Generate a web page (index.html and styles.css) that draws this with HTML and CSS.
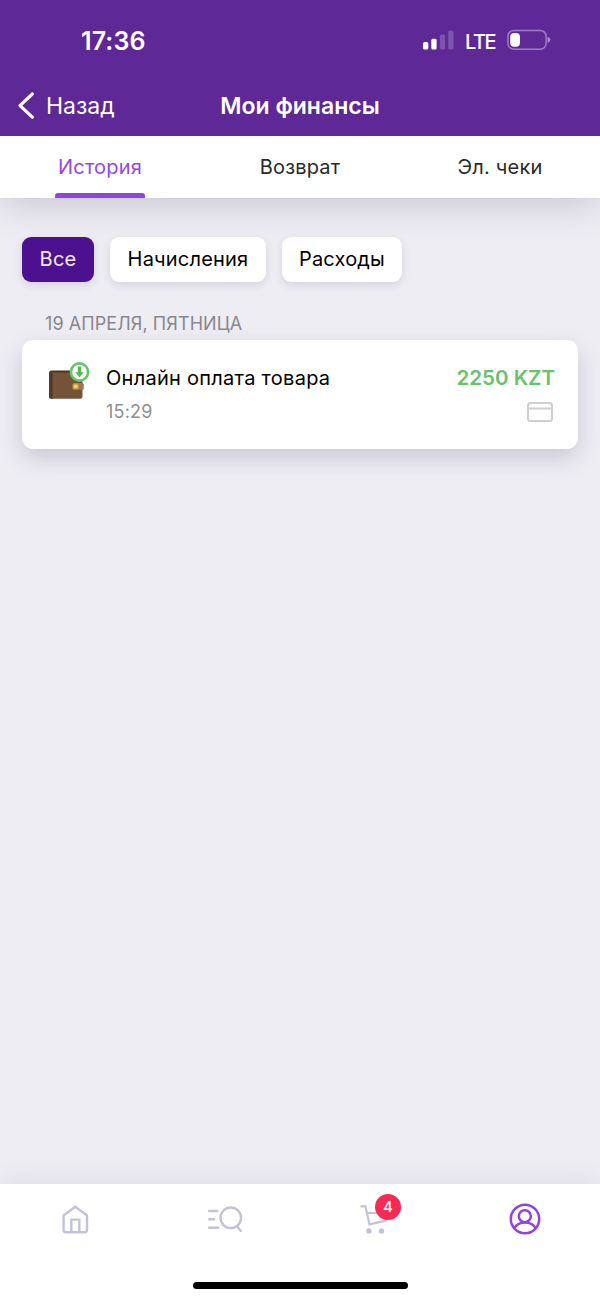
FILE: index.html
```html
<!DOCTYPE html>
<html lang="ru">
<head>
<meta charset="utf-8">
<title>Мои финансы</title>
<link rel="stylesheet" href="styles.css">
</head>
<body>
<div class="app">
  <header class="header">
    <div class="status">
      <span class="clock">17:36</span>
      <div class="indicators">
        <svg class="signal" width="32" height="20" viewBox="0 0 32 20" fill="#fff">
          <rect x="0" y="12" width="5.3" height="7.5" rx="1.5"/>
          <rect x="8.3" y="8.7" width="5.3" height="10.8" rx="1.5"/>
          <rect x="16.8" y="4.5" width="5.3" height="15" rx="1.5" opacity=".2"/>
          <rect x="25.2" y="0.5" width="5.3" height="19" rx="1.5" opacity=".2"/>
        </svg>
        <span class="network">LTE</span>
        <svg class="battery" width="44" height="22" viewBox="0 0 44 22">
          <rect x="0.9" y="1.4" width="38.2" height="18.8" rx="5.8" fill="none" stroke="#fff" stroke-opacity=".4" stroke-width="1.5"/>
          <rect x="3.2" y="4" width="9.8" height="13.8" rx="4" fill="#fff"/>
          <path d="M40.6 7.7q2.8 1 2.8 3.1t-2.8 3.1z" fill="#fff" fill-opacity=".5"/>
        </svg>
      </div>
    </div>
    <nav class="navbar">
      <a class="back">
        <svg width="18" height="28" viewBox="0 0 18 28" fill="none" stroke="#fff" stroke-width="3.2" stroke-linecap="round" stroke-linejoin="round"><path d="M15.3 2 3 13.6 15.3 25.2"/></svg>
        <span>Назад</span>
      </a>
      <h1 class="title">Мои финансы</h1>
    </nav>
  </header>

  <div class="tabs">
    <a class="tab tab-active"><span>История</span></a>
    <a class="tab"><span>Возврат</span></a>
    <a class="tab"><span>Эл. чеки</span></a>
  </div>

  <main class="content">
    <div class="chips">
      <button class="chip chip-all">Все</button>
      <button class="chip chip-income">Начисления</button>
      <button class="chip chip-expense">Расходы</button>
    </div>
    <h2 class="date">19 АПРЕЛЯ, ПЯТНИЦА</h2>
    <article class="card">
      <svg class="wallet" width="44" height="40" viewBox="0 0 44 40">
        <rect x="2" y="8.5" width="33" height="15" rx="3" fill="#493427"/>
        <rect x="2" y="10.4" width="33.5" height="26.3" rx="2.5" fill="#745338"/>
        <path d="M2 11h3.7v25.7H4.5A2.5 2.5 0 0 1 2 34.2z" fill="#523a2a"/>
        <rect x="25.5" y="21" width="11.3" height="6.8" rx="1.5" fill="#9b7958"/>
        <rect x="25.8" y="21.5" width="6" height="5.8" rx="1" fill="#c79c41"/>
        <circle cx="28.7" cy="24.4" r="1.9" fill="#f4d377"/>
        <circle cx="32.5" cy="10" r="8.6" fill="#fff" stroke="#67c56b" stroke-width="2.7"/>
        <path d="M30.8 4.6h3.4v5.6h2.5l-4.2 5.2-4.2-5.2h2.5z" fill="#57b95c"/>
      </svg>
      <div class="details">
        <div class="name">Онлайн оплата товара</div>
        <div class="time">15:29</div>
      </div>
      <div class="sum">
        <div class="amount">2250 KZT</div>
        <svg class="method" width="26" height="20" viewBox="0 0 26 20" fill="none" stroke="#cfcfcf" stroke-width="2"><rect x="1" y="1" width="24" height="18" rx="2.5"/><path d="M1 6.5h24"/></svg>
      </div>
    </article>
  </main>

  <footer class="tabbar">
    <a class="item">
      <svg width="28" height="30" viewBox="0 0 28 30" fill="none" stroke="#c4c3d5" stroke-width="2.4" stroke-linejoin="round"><path d="M14.3 2.7 26 11.5v14.6a2.2 2.2 0 0 1-2.2 2.2H4.8a2.2 2.2 0 0 1-2.2-2.2V11.5z"/><path d="M10.3 28.3V15.6h8v12.7"/></svg>
    </a>
    <a class="item">
      <svg width="36" height="30" viewBox="0 0 36 30" fill="none" stroke="#c4c3d5" stroke-width="2.4" stroke-linecap="round"><path d="M2.2 7h8M2.2 15.3h5M2.2 23.8h9M30.2 22.6 33.8 26.9"/><circle cx="23.8" cy="13.8" r="10.3"/></svg>
    </a>
    <a class="item">
      <span class="cart">
        <svg width="30" height="32" viewBox="0 0 30 32" fill="none" stroke="#c4c3d5" stroke-width="2.2"><path d="M.5 2.4h5l4 18 17.5-4M7.1 9h20"/><g fill="#c4c3d5" stroke="none"><circle cx="8.9" cy="27" r="2.7"/><circle cx="21.5" cy="27" r="2.7"/></g></svg>
        <span class="badge">4</span>
      </span>
    </a>
    <a class="item">
      <svg width="32" height="32" viewBox="0 0 32 32" fill="none" stroke="#9143dd" stroke-width="2.5"><circle cx="16" cy="16" r="14.2"/><circle cx="15.8" cy="13.2" r="6"/><path d="M5.2 25.4C9.5 17.5 22.5 17.5 26.8 25.4"/></svg>
    </a>
    <div class="home-indicator"></div>
  </footer>
</div>
</body>
</html>
```

FILE: styles.css
```css
* { box-sizing: border-box; }
body { margin: 0; font-family: Inter, "Noto Sans", sans-serif; color: #000; }
svg { display: block; flex: none; }
.app { display: flex; flex-direction: column; width: 600px; height: 1300px; background: #eeedf4; overflow: hidden; }

.header { position: relative; z-index: 2; height: 136px; flex: none; background: #5e2897; color: #fff; }
.status { display: flex; justify-content: space-between; height: 76px; padding: 0 49px 0 81px; }
.clock { margin-top: 26px; font-size: 25px; line-height: 30px; font-weight: 600; letter-spacing: .1px; }
.indicators { display: flex; align-items: flex-start; padding-top: 30px; }
.signal { margin-right: 10px; }
.network { width: 42px; font-size: 20px; line-height: 24px; font-weight: 500; letter-spacing: -1.5px; }
.battery { margin-top: -1px; }
.navbar { display: grid; grid-template-columns: 200px 200px 200px; align-items: center; height: 60px; }
.back { display: flex; align-items: center; gap: 11px; padding-left: 17px; font-size: 23px; }
.title { margin: 0; text-align: center; font-size: 23px; font-weight: 600; white-space: nowrap; }

.tabs { display: grid; grid-template-columns: repeat(3, 1fr); flex: none; height: 61.5px; background: #fff; box-shadow: 0 4px 38px rgba(40, 38, 55, .22); z-index: 1; }
.tab { display: flex; flex-direction: column; align-items: center; font-size: 20px; line-height: 62px; letter-spacing: .2px; color: #29292b; }
.tab-active { color: #9348e0; }
.tab-active::after { content: ""; width: 90px; height: 4.5px; margin-top: -5px; border-radius: 3px 3px 0 0; background: #9143dd; }

.content { flex: 1; padding: 39px 22px 0; }
.chips { display: flex; gap: 16px; }
.chip { height: 45px; padding: 0; border: 0; border-radius: 9px; background: #fff; color: #000; font: 400 20px/45px Inter, "Noto Sans", sans-serif; letter-spacing: .2px; box-shadow: 0 3px 9px rgba(40, 38, 55, .13); }
.chip-all { width: 72px; background: #4c118e; color: #fbeaff; }
.chip-income { width: 156px; }
.chip-expense { width: 120px; }
.date { margin: 30px 0 0 23px; font-size: 18px; line-height: 24px; font-weight: 400; letter-spacing: .08px; color: #88878e; }
.card { display: flex; height: 109px; margin-top: 4px; padding: 22px 23px 0 25px; border-radius: 11px; background: #fff; box-shadow: 0 9px 22px rgba(40, 38, 55, .18); }
.details { flex: 1; margin-left: 15px; }
.name { margin-top: 3px; font-size: 20px; line-height: 26px; letter-spacing: .27px; white-space: nowrap; }
.time { margin-top: 9px; font-size: 18px; line-height: 24px; letter-spacing: .2px; color: #8f8f91; }
.sum { display: flex; flex-direction: column; align-items: flex-end; }
.amount { margin-top: 3px; font-size: 20.5px; line-height: 26px; font-weight: 600; color: #67c26b; white-space: nowrap; }
.method { margin: 11px 2px 0 0; }

.tabbar { display: grid; grid-template-columns: repeat(4, 150px); grid-template-rows: 70px 1fr; flex: none; height: 116px; background: #fff; box-shadow: 0 -3px 24px rgba(40, 38, 55, .08); }
.item { display: flex; align-items: center; justify-content: center; }
.cart { position: relative; margin-top: 1px; }
.badge { position: absolute; left: 15px; top: -10px; width: 26px; height: 26px; border-radius: 50%; background: #f62b55; color: #fff; text-align: center; font-size: 15px; line-height: 26px; font-weight: 500; }
.home-indicator { grid-column: 1 / -1; justify-self: center; width: 215px; height: 7px; margin-top: 28px; border-radius: 4px; background: #000; }
```
